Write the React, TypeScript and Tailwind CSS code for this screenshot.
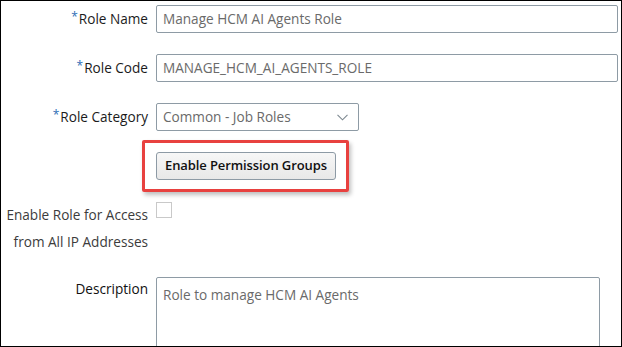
import React from "react";

const font = { fontFamily: '"Open Sans", "Noto Sans", sans-serif' };

function Label({ children, req }: { children: React.ReactNode; req?: boolean }) {
  return (
    <div className="flex items-center justify-end text-[13.6px] text-[#1b1b1b]">
      {req && <span className="text-[#2d6db5] text-[12px] self-start mt-[3px] mr-[1px]">*</span>}
      <span>{children}</span>
    </div>
  );
}

export default function App() {
  return (
    <div className="w-[622px] h-[347px] overflow-hidden bg-white border border-black" style={font}>
      <div className="grid grid-cols-[147px_1fr] gap-x-2 pr-[3px] pt-[4px]">
        <Label req>Role Name</Label>
        <div className="h-[28px] border border-[#8e9ba5] rounded-[2px] flex items-center px-[6px] text-[13.6px] text-[#6a6a6a]">
          Manage HCM AI Agents Role
        </div>

        <div className="col-span-2 h-[21px]" />
        <Label req>Role Code</Label>
        <div className="h-[28px] border border-[#8e9ba5] rounded-[2px] flex items-center px-[6px] text-[13.6px] text-[#6a6a6a]">
          MANAGE_HCM_AI_AGENTS_ROLE
        </div>

        <div className="col-span-2 h-[21px]" />
        <Label req>Role Category</Label>
        <div className="w-[203px] h-[28px] border border-[#8e9ba5] rounded-[2px] flex items-center justify-between pl-[6px] pr-[10px] text-[13.6px] text-[#6a6a6a]">
          <span>Common - Job Roles</span>
          <svg width="11" height="7" viewBox="0 0 11 7" className="mt-[1px]">
            <path d="M0.5 0.8 L5.5 5.8 L10.5 0.8" fill="none" stroke="#7d8890" strokeWidth="1.1" />
          </svg>
        </div>

        <div className="col-span-2 h-[21px]" />
        <div />
        <div className="flex">
          <div className="relative">
            <div className="absolute left-[-14px] right-[-13px] top-[-12px] bottom-[-12px] border-[3px] border-[#e8413f] rounded-[2px] shadow-[2px_3px_4px_rgba(0,0,0,0.25)]" />
            <button className="relative h-[28px] px-[8px] border border-[#8d9aa5] rounded-[3px] bg-gradient-to-b from-[#f7f7f7] to-[#e8e8e8] text-[13px] font-semibold text-[#111] tracking-[-0.1px]">
              Enable Permission Groups
            </button>
          </div>
        </div>

        <div className="col-span-2 h-[22px]" />
        <div className="flex flex-col items-end text-[13.6px] leading-[27px] text-[#3c3c3c] mt-[-1px]">
          <span>Enable Role for Access</span>
          <span>from All IP Addresses</span>
        </div>
        <div>
          <div className="w-[16px] h-[16px] border border-[#c9c9c9] bg-white" />
        </div>

        <div className="col-span-2 h-[22px]" />
        <div className="flex justify-end text-[13.6px] text-[#111] pt-[2px] leading-[20px]">Description</div>
        <div className="w-[444px] h-[90px] border border-[#8e9ba5] rounded-[2px] px-[6px] pt-[7px] text-[13.6px] text-[#6a6a6a] leading-[20px]">
          Role to manage HCM AI Agents
        </div>
      </div>
    </div>
  );
}
